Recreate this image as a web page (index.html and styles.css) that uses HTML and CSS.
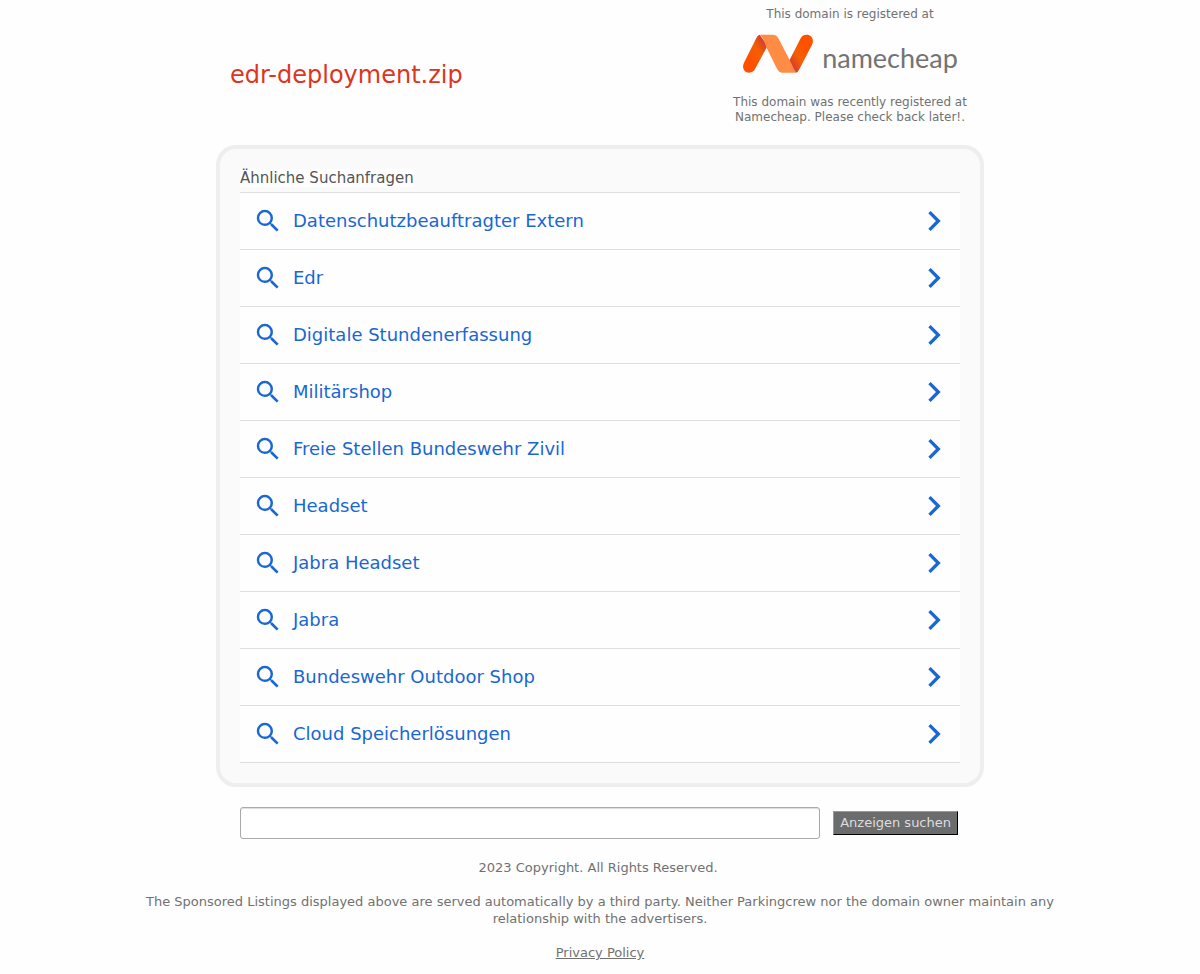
FILE: index.html
```html
<!DOCTYPE html>
<html lang="de">
<head>
<meta charset="utf-8">
<meta name="viewport" content="width=device-width, initial-scale=1">
<title>edr-deployment.zip</title>
<link rel="stylesheet" href="styles.css">
</head>
<body>
<svg class="sprite" aria-hidden="true">
  <symbol id="search" viewBox="0 0 24 24"><path d="M15.5 14h-.79l-.28-.27A6.471 6.471 0 0 0 16 9.5 6.5 6.5 0 1 0 9.5 16c1.61 0 3.09-.59 4.23-1.57l.27.28v.79l5 4.99L20.49 19l-4.99-5zm-6 0C7.01 14 5 11.99 5 9.5S7.01 5 9.5 5 14 7.01 14 9.5 11.99 14 9.5 14z"/></symbol>
  <symbol id="chevron" viewBox="0 0 24 24"><path d="M10 6 8.59 7.41 13.17 12l-4.58 4.59L10 18l6-6z"/></symbol>
</svg>
<div class="page">
  <header class="header">
    <h1 class="domain">edr-deployment.zip</h1>
    <div class="registrar">
      <p class="note">This domain is registered at</p>
      <div class="logo">
        <svg class="mark" viewBox="0 0 216 120" aria-hidden="true">
          <defs>
            <linearGradient id="left" x1="0" y1="1" x2="1" y2="0"><stop offset=".3" stop-color="#ff5000"/><stop offset=".6" stop-color="#f26005"/><stop offset=".85" stop-color="#d83a2c"/></linearGradient>
            <linearGradient id="right" x1="1" y1="0" x2="0" y2="1"><stop offset=".3" stop-color="#ff5000"/><stop offset=".6" stop-color="#f26005"/><stop offset=".85" stop-color="#d83a2c"/></linearGradient>
          </defs>
          <path fill="url(#left)" d="M53 5Q47 6 43 15L6 89C-2 105 8 119 21 119C31 119 36 114 39 108L77 38Z"/>
          <path fill="url(#right)" d="M162 119Q168 118 172 109L210 35C218 19 208 5 194 5C184 5 179 10 176 16L140 86Z"/>
          <path fill="#ff8c44" d="M53 5H91C102 5 107 11 110 17L146 87L155 106Q160 116 162 119H124C113 119 109 114 105 107L74 45L66 25Q60 9 53 5Z"/>
        </svg>
        <span class="wordmark">namecheap</span>
      </div>
      <p class="note">This domain was recently registered at Namecheap. Please check back later!.</p>
    </div>
  </header>
  <main>
    <section class="card">
      <h2 class="title"><span>Ähnliche Suchanfragen</span></h2>
      <nav class="list">
        <a class="item" href="#"><svg class="icon"><use href="#search"/></svg><span>Datenschutzbeauftragter Extern</span><svg class="arrow"><use href="#chevron"/></svg></a>
        <a class="item" href="#"><svg class="icon"><use href="#search"/></svg><span>Edr</span><svg class="arrow"><use href="#chevron"/></svg></a>
        <a class="item" href="#"><svg class="icon"><use href="#search"/></svg><span>Digitale Stundenerfassung</span><svg class="arrow"><use href="#chevron"/></svg></a>
        <a class="item" href="#"><svg class="icon"><use href="#search"/></svg><span>Militärshop</span><svg class="arrow"><use href="#chevron"/></svg></a>
        <a class="item" href="#"><svg class="icon"><use href="#search"/></svg><span>Freie Stellen Bundeswehr Zivil</span><svg class="arrow"><use href="#chevron"/></svg></a>
        <a class="item" href="#"><svg class="icon"><use href="#search"/></svg><span>Headset</span><svg class="arrow"><use href="#chevron"/></svg></a>
        <a class="item" href="#"><svg class="icon"><use href="#search"/></svg><span>Jabra Headset</span><svg class="arrow"><use href="#chevron"/></svg></a>
        <a class="item" href="#"><svg class="icon"><use href="#search"/></svg><span>Jabra</span><svg class="arrow"><use href="#chevron"/></svg></a>
        <a class="item" href="#"><svg class="icon"><use href="#search"/></svg><span>Bundeswehr Outdoor Shop</span><svg class="arrow"><use href="#chevron"/></svg></a>
        <a class="item" href="#"><svg class="icon"><use href="#search"/></svg><span>Cloud Speicherlösungen</span><svg class="arrow"><use href="#chevron"/></svg></a>
      </nav>
    </section>
    <form class="search">
      <input class="field" type="text" name="q" aria-label="Anzeigen suchen">
      <button class="submit" type="submit">Anzeigen suchen</button>
    </form>
  </main>
</div>
<footer class="footer">
  <p class="copyright">2023 Copyright. All Rights Reserved.</p>
  <p>The Sponsored Listings displayed above are served automatically by a third party. Neither Parkingcrew nor the domain owner maintain any relationship with the advertisers.</p>
  <p><a class="privacy" href="#">Privacy Policy</a></p>
</footer>
</body>
</html>
```

FILE: styles.css
```css
* { box-sizing: border-box; }
body {
  margin: 0;
  background: #fefefe;
  color: #717171;
  font: 13px/17px "DejaVu Sans", sans-serif;
}
h1, h2, p { margin: 0; font-weight: normal; }
.sprite { display: none; }
.page { max-width: 768px; margin: 0 auto; }

.header {
  display: flex;
  justify-content: space-between;
  align-items: center;
  padding: 7px 14px 20px;
}
.domain { padding-top: 17px; color: #dc3522; font-size: 24px; line-height: 28px; }
.registrar { width: 240px; text-align: center; }
.note { font-size: 12px; line-height: 15px; }
.logo {
  display: flex;
  align-items: center;
  justify-content: center;
  gap: 8px;
  height: 73px;
  padding-bottom: 11px;
}
.mark { width: 72px; height: 40px; }
.wordmark {
  padding-top: 9px;
  color: #737373;
  font: 27px/36px Lato, sans-serif;
}

.card {
  padding: 20px;
  border: 4px solid #eee;
  border-radius: 20px;
  background: #fafafa;
}
.title { margin-bottom: 5px; color: #555; font-size: 15px; line-height: 18px; }
.title span { background: #fefefe; }
.list { border-top: 1px solid #dedede; }
.item {
  display: flex;
  align-items: center;
  height: 57px;
  padding: 0 6px 0 13px;
  border-bottom: 1px solid #dedede;
  background: #fefefe;
  color: #1967d2;
  font-size: 18px;
  line-height: 22px;
  text-decoration: none;
}
.icon, .arrow { fill: currentColor; }
.icon { width: 30px; height: 30px; margin-right: 10px; }
.arrow { width: 40px; height: 40px; margin-left: auto; }

.search { display: flex; align-items: center; gap: 13px; padding: 20px 26px 0 24px; }
.field {
  flex: 1;
  min-width: 0;
  height: 32px;
  border: 1px solid #aaa;
  border-radius: 3px;
  background: #fff;
  box-shadow: inset 0 1px 1px #ddd;
}
.submit {
  height: 24px;
  padding: 0 6px 1px;
  border: 1px solid;
  border-color: #999 #000 #000 #999;
  background: #6b6c6e;
  color: #ddd;
  font: 13px/17px "DejaVu Sans", sans-serif;
}

.footer {
  display: grid;
  gap: 17px;
  max-width: 960px;
  margin: 0 auto;
  padding: 20px 20px 13px;
  text-align: center;
}
.copyright { padding-right: 4px; }
.privacy { color: inherit; }
```
